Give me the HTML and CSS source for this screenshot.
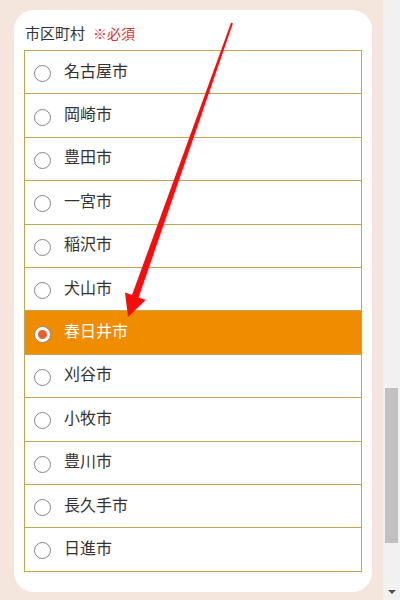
FILE: index.html
```html
<!DOCTYPE html>
<html lang="ja">
<head>
<meta charset="utf-8">
<link rel="stylesheet" href="styles.css">
</head>
<body>
<div class="page">
  <div class="main">
    <div class="card">
      <div class="label">市区町村<span class="req">※必須</span></div>
      <div class="list">
        <div class="row"><span class="radio"></span><span class="name">名古屋市</span></div>
        <div class="row"><span class="radio"></span><span class="name">岡崎市</span></div>
        <div class="row"><span class="radio"></span><span class="name">豊田市</span></div>
        <div class="row"><span class="radio"></span><span class="name">一宮市</span></div>
        <div class="row"><span class="radio"></span><span class="name">稲沢市</span></div>
        <div class="row"><span class="radio"></span><span class="name">犬山市</span></div>
        <div class="row selected"><span class="radio"></span><span class="name">春日井市</span></div>
        <div class="row"><span class="radio"></span><span class="name">刈谷市</span></div>
        <div class="row"><span class="radio"></span><span class="name">小牧市</span></div>
        <div class="row"><span class="radio"></span><span class="name">豊川市</span></div>
        <div class="row"><span class="radio"></span><span class="name">長久手市</span></div>
        <div class="row"><span class="radio"></span><span class="name">日進市</span></div>
      </div>
    </div>
  </div>
  <div class="scrollbar">
    <div class="track-top"></div>
    <div class="thumb"></div>
    <div class="track-rest"></div>
    <div class="btn-down"><span class="tri"></span></div>
  </div>
</div>
<svg class="arrow" width="400" height="600" viewBox="0 0 400 600">
  <polygon points="231.06,22.67 232.94,23.33 138.6,297.5 145.7,300 128,317 125,292.6 132,295.1" fill="#ff0a0a"/>
</svg>
</body>
</html>
```
FILE: styles.css
```css
html, body {
  margin: 0;
  padding: 0;
  width: 400px;
  height: 600px;
  overflow: hidden;
  font-family: "Noto Sans CJK JP", "Noto Sans", sans-serif;
}
body {
  position: relative;
}
.page {
  display: flex;
  height: 600px;
}
.main {
  flex: 1;
  background: #f4e6dd;
  padding: 10px 11px 0 14px;
}
.card {
  background: #fff;
  border-radius: 20px;
  padding: 13px 10px 20px 10px;
}
.label {
  height: 22px;
  line-height: 20px;
  margin: 0 0 5px 1px;
  font-size: 15px;
  color: #333;
}
.req {
  color: #d9302c;
  font-size: 14px;
  margin-left: 8px;
}
.list {
  border: 1px solid #c4a550;
  border-top: none;
}
.row {
  box-sizing: border-box;
  height: 43.4px;
  border-top: 1px solid #c4a550;
  display: flex;
  align-items: center;
  padding-left: 9px;
  font-size: 16px;
  color: #333;
}
.name {
  margin-bottom: 5px;
}
.radio {
  box-sizing: border-box;
  width: 17px;
  height: 17px;
  border: 1px solid #858585;
  border-radius: 50%;
  background: #fff;
  margin-right: 13px;
  margin-top: 3px;
  display: flex;
  align-items: center;
  justify-content: center;
}
.row.selected {
  background: #f08c00;
  color: #fff;
}
.row.selected .radio::after {
  content: "";
  width: 9px;
  height: 9px;
  border-radius: 50%;
  background: #e2622a;
}
.scrollbar {
  width: 17px;
  background: #f1f1f1;
  display: flex;
  flex-direction: column;
}
.track-top {
  height: 388px;
}
.thumb {
  height: 155px;
  margin: 0 2px;
  background: #c1c1c1;
}
.track-rest {
  flex: 1;
}
.btn-down {
  height: 17px;
  display: flex;
  align-items: center;
  justify-content: center;
}
.tri {
  width: 0;
  height: 0;
  border-left: 4px solid transparent;
  border-right: 4px solid transparent;
  border-top: 4px solid #505050;
}
.arrow {
  position: absolute;
  top: 0;
  left: 0;
  pointer-events: none;
}
```
